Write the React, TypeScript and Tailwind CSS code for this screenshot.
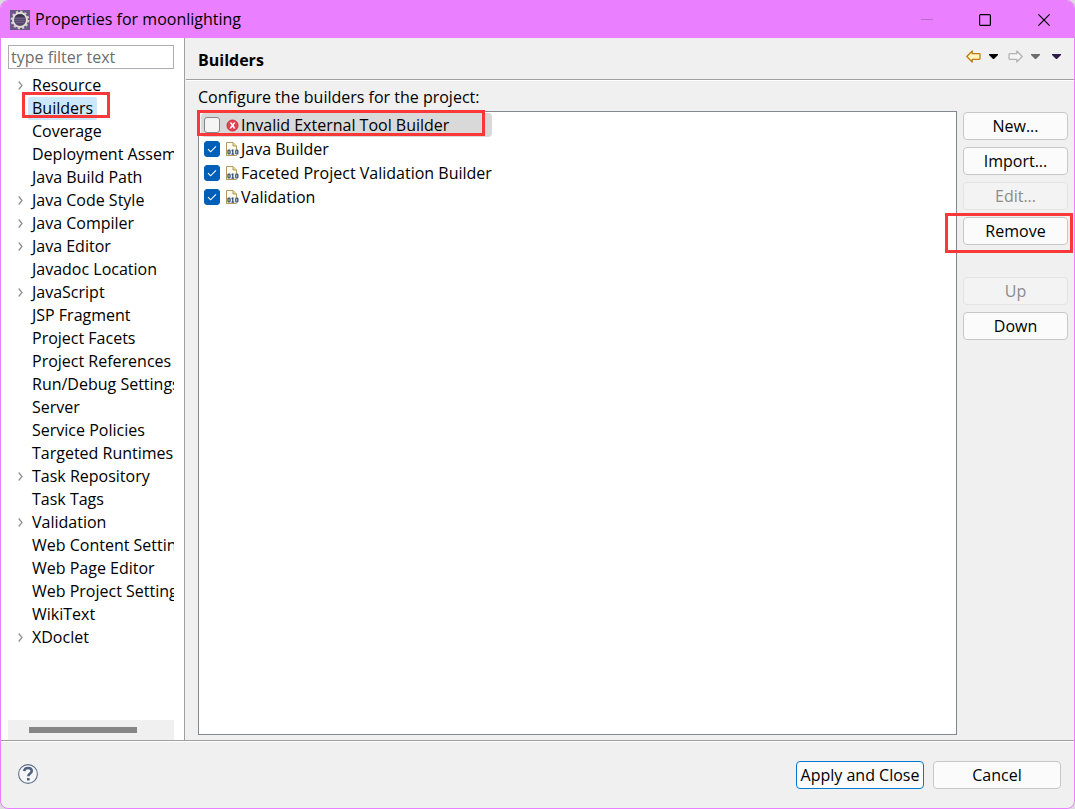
import { FC, ReactNode, useState } from "react";
import clsx from "clsx";

type Page = { name: string; children?: boolean };

const pages: Page[] = [
  { name: "Resource", children: true },
  { name: "Builders" },
  { name: "Coverage" },
  { name: "Deployment Assembly" },
  { name: "Java Build Path" },
  { name: "Java Code Style", children: true },
  { name: "Java Compiler", children: true },
  { name: "Java Editor", children: true },
  { name: "Javadoc Location" },
  { name: "JavaScript", children: true },
  { name: "JSP Fragment" },
  { name: "Project Facets" },
  { name: "Project References" },
  { name: "Run/Debug Settings" },
  { name: "Server" },
  { name: "Service Policies" },
  { name: "Targeted Runtimes" },
  { name: "Task Repository", children: true },
  { name: "Task Tags" },
  { name: "Validation", children: true },
  { name: "Web Content Settings" },
  { name: "Web Page Editor" },
  { name: "Web Project Settings" },
  { name: "WikiText" },
  { name: "XDoclet", children: true },
];

const builders = [
  { name: "Invalid External Tool Builder", enabled: false, invalid: true },
  { name: "Java Builder", enabled: true },
  { name: "Faceted Project Validation Builder", enabled: true },
  { name: "Validation", enabled: true },
];

const EclipseIcon = () => (
  <svg width="20" height="20" viewBox="0 0 20 20" aria-hidden="true">
    <rect width="20" height="20" fill="#6c5688" />
    <circle cx="10" cy="10" r="8.4" fill="none" stroke="#cfccc8" strokeWidth="2" strokeDasharray="2.2 2.2" />
    <circle cx="10" cy="10" r="7" fill="#55486c" stroke="#e2dfd9" strokeWidth="1.9" />
    <path d="M5 6.8a6 6 0 0 1 10 0z" fill="#3a3446" />
    <path d="M4.5 8.5h11M4.5 10.5h11M5.5 12.5h9" stroke="#7a6c92" strokeWidth="0.7" />
  </svg>
);

const ErrorIcon = () => (
  <svg width="13" height="13" viewBox="0 0 13 13" aria-hidden="true">
    <circle cx="6.5" cy="6.5" r="5.5" fill="#e04452" stroke="#cf2c3c" />
    <path d="M3.6 3.4h1.9l1.1 1.7 1.2-1.7h1.7L7.6 6.3l1.8 3.3H7.6L6.4 7.7 5.2 9.6H3.4l2.2-3.3z" fill="#fff" />
  </svg>
);

const BinaryIcon = () => (
  <svg width="13" height="14" viewBox="0 0 13 14" aria-hidden="true">
    <path d="M.5 13.5V.5h6.5l3.5 3.5v9.5z" fill="#fdfaf0" stroke="#b29b5e" />
    <path d="M7 .5v3.5h3.5" fill="#ead9a4" stroke="#b29b5e" />
    <path d="M1 7.5h12v5.5H1z" fill="#f4f3ee" />
    <g fill="none" stroke="#2d4668" strokeWidth="1.2">
      <rect x="2" y="8" width="2" height="4" rx="0.8" />
      <path d="M5.6 8.7l1.2-.7v4.4M5.5 12.1h2.6" />
      <rect x="9.8" y="8" width="2" height="4" rx="0.8" />
    </g>
  </svg>
);

const Arrow: FC<{ forward?: boolean }> = ({ forward }) => (
  <svg
    width="15"
    height="13"
    viewBox="0 0 15 13"
    className={clsx(forward && "-scale-x-100")}
    aria-hidden="true"
  >
    <path
      d="M.8 6.5L6.2 1v2.7h7q.8 0 .8.8v4q0 .8-.8.8h-7V12z"
      fill={forward ? "#f5f5f5" : "#fff3bf"}
      stroke={forward ? "#b4b4b4" : "#bd7d12"}
      strokeWidth="1.3"
      strokeLinejoin="round"
    />
  </svg>
);

const Caret: FC<{ color: string }> = ({ color }) => (
  <svg width="9" height="5" viewBox="0 0 9 5" aria-hidden="true">
    <path d="M0 0h9v1L5 5H4L0 1z" fill={color} />
  </svg>
);

// red frame that points the reader at a control
const Marker: FC<{ className: string }> = ({ className }) => (
  <div className={clsx("pointer-events-none absolute z-10 border-3 border-[#fb3838]", className)} />
);

type ButtonProps = {
  children: ReactNode;
  disabled?: boolean;
  primary?: boolean;
  className?: string;
};

const Button: FC<ButtonProps> = ({ children, disabled, primary, className }) => (
  <button
    type="button"
    disabled={disabled}
    className={clsx(
      "h-7 rounded border text-center leading-6 whitespace-nowrap",
      disabled
        ? "border-[#e3e3e3] bg-[#f3f3f3] text-[#8c8c8c]"
        : primary
          ? "border-[#0078d4] bg-[#fbfbfb]"
          : "border-[#c8c8c8] bg-[#fbfbfb]",
      className
    )}
  >
    {children}
  </button>
);

const TitleBar = () => (
  <header className="flex h-[37px] shrink-0 items-center bg-[#ea80ff] pl-[9px]">
    <EclipseIcon />
    <h1 className="ml-[5px] flex-1 pb-0.5">Properties for moonlighting</h1>
    <button type="button" aria-label="Minimize" disabled className="flex h-full w-[58px] items-center justify-center">
      <svg width="12" height="12" viewBox="0 0 12 12" stroke="#b96bc9">
        <path d="M0 5.5h12" />
      </svg>
    </button>
    <button type="button" aria-label="Maximize" className="flex h-full w-[58px] items-center justify-center">
      <svg width="12" height="12" viewBox="0 0 12 12" fill="none" stroke="#000" strokeWidth="1.2">
        <rect x="0.6" y="0.6" width="10.8" height="10.8" rx="1" />
      </svg>
    </button>
    <button type="button" aria-label="Close" className="flex h-full w-[60px] items-center justify-center">
      <svg width="12" height="12" viewBox="0 0 12 12" fill="none" stroke="#000" strokeWidth="1.2">
        <path d="M.4.4l11.2 11.2M11.6.4L.4 11.6" />
      </svg>
    </button>
  </header>
);

const Sidebar = () => (
  <nav className="flex w-[184px] shrink-0 flex-col border-r border-[#a0a0a0] bg-white pt-[7px] pr-2.5 pl-[7px]">
    <input
      type="text"
      aria-label="Filter"
      placeholder="type filter text"
      className="h-6 w-full border border-[#abadb3] px-0.5 placeholder:text-[#6d6d6d]"
    />
    <ul className="mt-[5px] flex-1">
      {pages.map((page) => (
        <li key={page.name} className="relative flex h-[23px] items-center">
          <span className="flex w-5 shrink-0 justify-center pl-1">
            {page.children && (
              <svg width="5" height="9" viewBox="0 0 5 9" fill="none" stroke="#8c8c8c" strokeWidth="1.2" aria-hidden="true">
                <path d="M.7.5l3.3 4-3.3 4" />
              </svg>
            )}
          </span>
          <a
            href="#"
            className={clsx(
              "overflow-hidden px-1 leading-[23px] whitespace-nowrap",
              page.name === "Builders" && "rounded-xs bg-[#cce8ff]"
            )}
          >
            {page.name}
          </a>
          {page.name === "Builders" && <Marker className="-top-[5px] left-3.5 h-[26px] w-[88px]" />}
        </li>
      ))}
    </ul>
    <div className="h-5 bg-[#f0f0f0] pt-[7px] pl-[21px]">
      <div className="h-1.5 w-[108px] bg-[#868686]" />
    </div>
  </nav>
);

const BuilderRow: FC<(typeof builders)[number]> = ({ name, enabled, invalid }) => {
  const [checked, setChecked] = useState(enabled);

  return (
    <li className={clsx("relative flex h-6 items-center pl-[3px]", invalid && "w-[291px] rounded-sm bg-[#d9d9d9]")}>
      <label className="flex items-center whitespace-nowrap">
        <span className="grid size-4">
          <input
            type="checkbox"
            checked={checked}
            onChange={() => setChecked(!checked)}
            className="col-start-1 row-start-1 size-4 appearance-none rounded-[3px] border border-[#868686] bg-[#f5f5f5] checked:border-[#005fb8] checked:bg-[#005fb8]"
          />
          {checked && (
            <svg viewBox="0 0 16 16" className="pointer-events-none col-start-1 row-start-1" fill="none" stroke="#fff" strokeWidth="1.1">
              <path d="M4 8.2l2.6 2.6L12 5.4" />
            </svg>
          )}
        </span>
        <span className="mr-0.5 ml-1.5 flex">{invalid ? <ErrorIcon /> : <BinaryIcon />}</span>
        {name}
      </label>
      {invalid && <Marker className="-top-[3px] -left-1 h-[26px] w-72" />}
    </li>
  );
};

export default function App() {
  return (
    <div className="min-h-screen bg-[#dcdcdc] font-['Open_Sans','Noto_Sans',sans-serif] text-base leading-6 text-black">
      <div className="flex min-h-screen flex-col overflow-hidden rounded-lg border border-[#ea80ff] bg-[#f0f0f0]">
        <TitleBar />
        <div className="flex flex-1">
          <Sidebar />
          <main className="flex min-w-0 flex-1 flex-col pl-px">
            <div className="flex h-[42px] items-center border-b border-[#a0a0a0] pr-[13px] pl-3">
              <h2 className="flex-1 pt-0.5 font-bold">Builders</h2>
              <div className="mb-1 flex items-center">
                <button type="button" aria-label="Back">
                  <Arrow />
                </button>
                <button type="button" aria-label="Back history" className="ml-2">
                  <Caret color="#000" />
                </button>
                <button type="button" aria-label="Forward" className="ml-2.5">
                  <Arrow forward />
                </button>
                <button type="button" aria-label="Forward history" className="ml-2">
                  <Caret color="#6d6d6d" />
                </button>
                <button type="button" aria-label="View menu" className="ml-3">
                  <Caret color="#2b1a4a" />
                </button>
              </div>
            </div>
            <div className="flex flex-1 flex-col border-t border-white pr-1.5 pb-[5px] pl-3">
              <p className="mt-1 mb-0.5">Configure the builders for the project:</p>
              <div className="flex flex-1 gap-1.5">
                <ul className="min-w-0 flex-1 border border-[#828790] bg-white pt-px pl-0.5">
                  {builders.map((builder) => (
                    <BuilderRow key={builder.name} {...builder} />
                  ))}
                </ul>
                <div className="flex w-[105px] shrink-0 flex-col gap-[7px] pt-px">
                  <Button>New...</Button>
                  <Button>Import...</Button>
                  <Button disabled>Edit...</Button>
                  <div className="relative mb-[25px] flex flex-col">
                    <Button>Remove</Button>
                    <Marker className="-top-1 -right-[5px] -left-[18px] h-10" />
                  </div>
                  <Button disabled>Up</Button>
                  <Button>Down</Button>
                </div>
              </div>
            </div>
          </main>
        </div>
        <footer className="border-t border-[#a0a0a0]">
          <div className="flex items-center gap-[9px] border-t border-white pt-[19px] pr-[13px] pb-[19px] pl-[17px]">
            <button type="button" aria-label="Help" className="mr-auto pb-0.5">
              <svg width="20" height="20" viewBox="0 0 20 20" fill="none" aria-hidden="true">
                <circle cx="10" cy="10" r="9.4" fill="#f6f6f8" stroke="#5f7089" strokeWidth="1.1" />
                <path d="M6.2 7.2C6.4 5 8 4.1 10 4.1s3.8 1.1 3.8 3c0 2.4-3.5 2.6-3.5 5.1" stroke="#4f6283" strokeWidth="2.5" />
                <path d="M9 14h2.6v2.4H9z" fill="#4f6283" />
              </svg>
            </button>
            <Button primary className="w-32">Apply and Close</Button>
            <Button className="w-32">Cancel</Button>
          </div>
        </footer>
      </div>
    </div>
  );
}
